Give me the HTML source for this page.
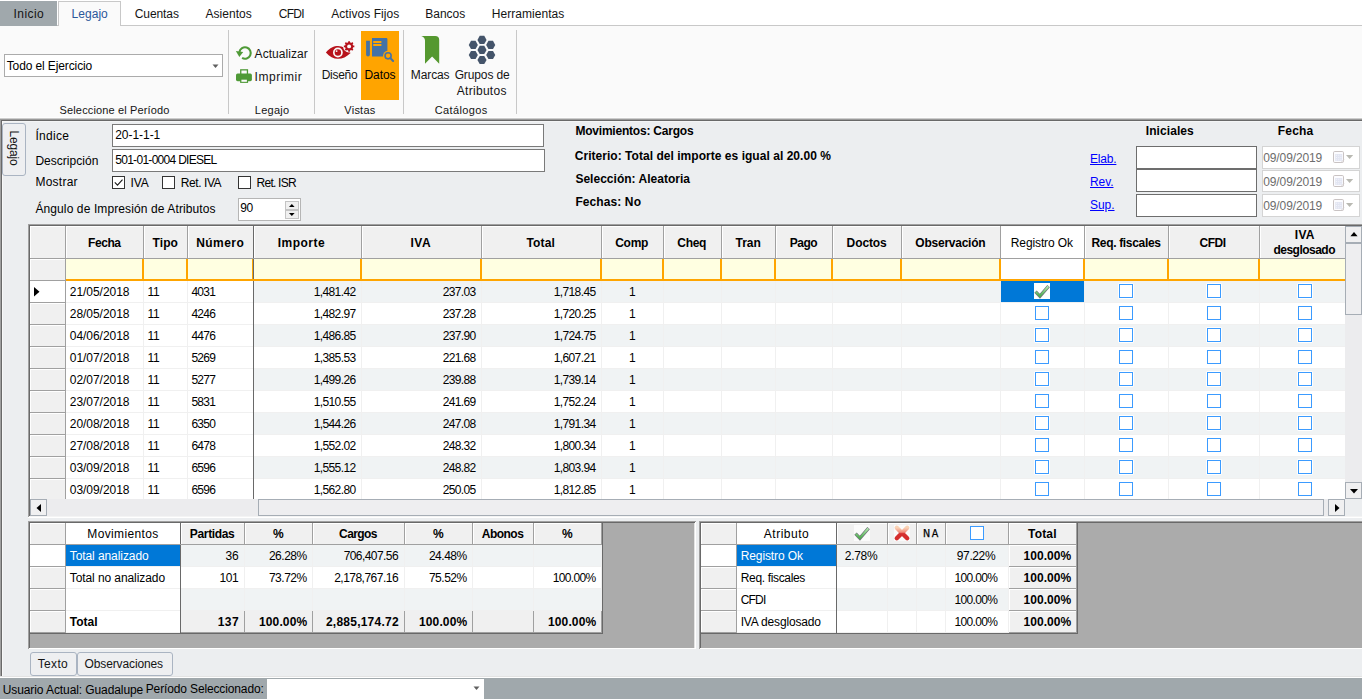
<!DOCTYPE html>
<html lang="es"><head><meta charset="utf-8"><title>Legajo</title>
<style>
html,body{margin:0;padding:0}
body{width:1362px;height:699px;position:relative;overflow:hidden;background:#eceef0;font:12px/16px "Liberation Sans", sans-serif;}
body div,body span.t,body svg{position:absolute}
.t{white-space:pre;color:#141414}
.b{border:1px solid;box-sizing:border-box}
.clip{overflow:hidden}
svg{overflow:visible}
</style></head>
<body>
<svg width="0" height="0" style="left:0;top:0"><defs>
<linearGradient id="gg" x1="0" y1="0" x2="0" y2="1"><stop offset="0" stop-color="#b4ecb0"/><stop offset="1" stop-color="#4cae4c"/></linearGradient>
<linearGradient id="gx" x1="0" y1="0" x2="0" y2="1"><stop offset="0" stop-color="#f9d2b4"/><stop offset="0.420" stop-color="#f28c7c"/><stop offset="0.560" stop-color="#d63030"/><stop offset="1" stop-color="#d42c2c"/></linearGradient>
<g id="chk"><path d="M1.500 8.700l4.400 4.500 8.700-10.100" fill="none" stroke="#70787a" stroke-width="3.300"/><path d="M1.800 8.900l4.100 4.100 8.400-9.700" fill="none" stroke="url(#gg)" stroke-width="1.900"/></g>
<g id="xx"><path d="M2.800 2.800l10.400 10.400M13.200 2.800l-10.400 10.400" stroke="url(#gx)" stroke-width="4.400" stroke-linecap="round" fill="none"/></g>
</defs></svg>
<div style="left:0px;top:0px;width:1362px;height:26px;background:#fff;"></div>
<div style="left:0px;top:25px;width:1362px;height:1px;background:#c8c8c8;"></div>
<div style="left:0px;top:1px;width:57px;height:25px;background:#a0a8ac;"></div>
<div class="b" style="left:58px;top:1px;width:63px;height:25px;background:#fafafa;border-color:#c8c8c8;border-bottom:none;"></div>
<span id="t0" class="t" style="top:5.84px;letter-spacing:0.409px;left:13.62px;">Inicio</span>
<span id="t1" class="t" style="top:5.84px;color:#2b579a;letter-spacing:0.023px;left:71.62px;">Legajo</span>
<span id="t2" class="t" style="top:5.84px;letter-spacing:-0.074px;left:134.72px;">Cuentas</span>
<span id="t3" class="t" style="top:5.84px;letter-spacing:0.047px;left:205.42px;">Asientos</span>
<span id="t4" class="t" style="top:5.84px;letter-spacing:-0.747px;left:278.82px;">CFDI</span>
<span id="t5" class="t" style="top:5.84px;letter-spacing:0.058px;left:331.22px;">Activos Fijos</span>
<span id="t6" class="t" style="top:5.84px;letter-spacing:0.006px;left:425.22px;">Bancos</span>
<span id="t7" class="t" style="top:5.84px;letter-spacing:0.048px;left:491.72px;">Herramientas</span>
<div style="left:0px;top:26px;width:1362px;height:92px;background:#fafafa;"></div>
<div style="left:228px;top:30px;width:1px;height:84px;background:#c8c8c8;"></div>
<div style="left:314px;top:30px;width:1px;height:84px;background:#c8c8c8;"></div>
<div style="left:403px;top:30px;width:1px;height:84px;background:#c8c8c8;"></div>
<div style="left:516px;top:30px;width:1px;height:84px;background:#c8c8c8;"></div>
<div class="b" style="left:4px;top:54px;width:219px;height:23px;background:#fff;border-color:#ababab;"></div>
<span id="t8" class="t" style="top:57.84px;color:#000;letter-spacing:-0.113px;left:6.72px;">Todo el Ejercicio</span>
<svg style="left:212px;top:64px" width="8" height="5"><path d="M0.500 0.500h6l-3 3.500z" fill="#606060"/></svg>
<span id="t9" class="t" style="top:102.19px;font-size:11px;letter-spacing:0.146px;left:-85.43px;width:400px;text-align:center;">Seleccione el Período</span>
<span id="t10" class="t" style="top:102.19px;font-size:11px;letter-spacing:0.277px;left:72.14px;width:400px;text-align:center;">Legajo</span>
<span id="t11" class="t" style="top:102.19px;font-size:11px;letter-spacing:0.233px;left:159.92px;width:400px;text-align:center;">Vistas</span>
<span id="t12" class="t" style="top:102.19px;font-size:11px;letter-spacing:0.360px;left:261.18px;width:400px;text-align:center;">Catálogos</span>
<div style="left:361px;top:31px;width:38px;height:69px;background:#ffa400;"></div>
<svg style="left:0;top:0" width="600" height="118" viewBox="0 0 600 118"><path d="M239.4 52A5.700 5.700 0 1 1 242.100 57.900" fill="none" stroke="#4f9a37" stroke-width="2.100"/><path d="M235.900 51.100l7.300.800-3.900 5.200z" fill="#4f9a37"/><rect x="240.750" y="69.850" width="6.700" height="5" fill="#fafafa" stroke="#4f9a37" stroke-width="1.300"/><rect x="236" y="73.600" width="15.900" height="7.600" rx="1.600" fill="#4f9a37"/><rect x="240.100" y="78.400" width="8" height="4.500" fill="#4f9a37"/><rect x="241.400" y="79.700" width="5.500" height="2.100" fill="#fafafa"/><path d="M325.900 52.400C330 47.700 334 46 338 46c4.500 0 9 2.300 12.600 6.900C346.500 56.800 342.500 58.800 338 58.800c-4.500 0-8.500-2-12.100-6.400z" fill="#b7121b"/><circle cx="337.900" cy="52.500" r="4.900" fill="#fafafa"/><circle cx="337.900" cy="52.500" r="3.200" fill="#b7121b"/><circle cx="336.600" cy="51.100" r="0.950" fill="#fafafa"/><circle cx="349.100" cy="46.400" r="6" fill="#fafafa"/><path d="M354.33 45.57L354.33 47.23L353.14 47.34L352.62 48.60L353.39 49.52L352.22 50.69L351.30 49.92L350.04 50.44L349.93 51.63L348.27 51.63L348.16 50.44L346.90 49.92L345.98 50.69L344.81 49.52L345.58 48.60L345.06 47.34L343.87 47.23L343.87 45.57L345.06 45.46L345.58 44.20L344.81 43.28L345.98 42.11L346.90 42.88L348.16 42.36L348.27 41.17L349.93 41.17L350.04 42.36L351.30 42.88L352.22 42.11L353.39 43.28L352.62 44.20L353.14 45.46z" fill="#b7121b"/><circle cx="349.100" cy="46.400" r="1.950" fill="#fafafa"/><path d="M372 37.900h14.400a1 1 0 0 1 1 1v17.600H372z" fill="#4472a6"/><path d="M366.100 40.800h3.800v13.700a1.900 1.900 0 0 1-3.800 0z" fill="#4472a6"/><path d="M373.200 42h8.200M373.200 45h8.200" stroke="#ffa400" stroke-width="1.800"/><circle cx="388.100" cy="55.800" r="5.100" fill="#ffa400"/><circle cx="388.100" cy="55.800" r="3.050" fill="#ffa400" stroke="#4472a6" stroke-width="1.600"/><path d="M390.400 58.100l2.700 2.900" stroke="#4472a6" stroke-width="2.100" stroke-linecap="round"/><path d="M421.300 36h13.900a4 4 0 0 1 4 4v23.700l-7.100-7.300-7.100 7.300V40.500c0-2.300-1.500-3.700-3.700-4.500z" fill="#55982f"/><polygon points="477.45,49.90 479.73,45.85 484.27,45.85 486.55,49.90 484.27,53.95 479.73,53.95" fill="#44546a"/><polygon points="477.45,39.90 479.73,35.85 484.27,35.85 486.55,39.90 484.27,43.95 479.73,43.95" fill="#44546a"/><polygon points="477.45,60.00 479.73,55.95 484.27,55.95 486.55,60.00 484.27,64.05 479.73,64.05" fill="#44546a"/><polygon points="468.75,44.90 471.03,40.85 475.57,40.85 477.85,44.90 475.57,48.95 471.03,48.95" fill="#44546a"/><polygon points="486.15,44.90 488.43,40.85 492.97,40.85 495.25,44.90 492.97,48.95 488.43,48.95" fill="#44546a"/><polygon points="468.75,55.00 471.03,50.95 475.57,50.95 477.85,55.00 475.57,59.05 471.03,59.05" fill="#44546a"/><polygon points="486.15,55.00 488.43,50.95 492.97,50.95 495.25,55.00 492.97,59.05 488.43,59.05" fill="#44546a"/></svg>
<span id="t13" class="t" style="top:45.84px;letter-spacing:0.053px;left:254.62px;">Actualizar</span>
<span id="t14" class="t" style="top:68.84px;letter-spacing:0.547px;left:254.62px;">Imprimir</span>
<span id="t15" class="t" style="top:66.84px;letter-spacing:-0.260px;left:139.57px;width:400px;text-align:center;">Diseño</span>
<span id="t16" class="t" style="top:66.84px;color:#000;letter-spacing:-0.075px;left:179.96px;width:400px;text-align:center;">Datos</span>
<span id="t17" class="t" style="top:66.84px;letter-spacing:-0.097px;left:230.15px;width:400px;text-align:center;">Marcas</span>
<span id="t18" class="t" style="top:66.84px;letter-spacing:-0.123px;left:282.14px;width:400px;text-align:center;">Grupos de</span>
<span id="t19" class="t" style="top:82.84px;letter-spacing:0.300px;left:281.75px;width:400px;text-align:center;">Atributos</span>
<div style="left:0px;top:119px;width:1362px;height:559px;background:#eceef0;"></div>
<div style="left:0px;top:117px;width:1362px;height:1px;background:#fdfdfd;"></div>
<div style="left:0px;top:118px;width:1362px;height:1px;background:#cdcdcd;"></div>
<div style="left:0px;top:119px;width:1362px;height:1px;background:#999999;"></div>
<div style="left:0px;top:120px;width:1362px;height:1px;background:#696969;"></div>
<div style="left:2px;top:121px;width:1360px;height:1px;background:#f4f5f6;"></div>
<div style="left:0px;top:120px;width:1px;height:556px;background:#a0a0a0;"></div>
<div style="left:1px;top:120px;width:1px;height:556px;background:#696969;"></div>
<div style="left:2px;top:121px;width:1px;height:555px;background:#f8f8f8;"></div>
<div style="left:0px;top:676px;width:1362px;height:1px;background:#e3e3e3;"></div>
<div style="left:0px;top:677px;width:1362px;height:1px;background:#fff;"></div>
<div class="b" style="left:2px;top:123px;width:24px;height:53px;background:#eeeff1;border-color:#aab4c2;border-radius:3px;"></div>
<span class="t" style="left:-6px;top:140px;width:40px;text-align:center;transform:rotate(90deg);letter-spacing:-0.200px">Legajo</span>
<span id="t20" class="t" style="top:127.84px;color:#000;letter-spacing:0.306px;left:35.42px;">Índice</span>
<span id="t21" class="t" style="top:152.84px;color:#000;letter-spacing:0.026px;left:35.42px;">Descripción</span>
<span id="t22" class="t" style="top:173.84px;color:#000;letter-spacing:0.248px;left:35.42px;">Mostrar</span>
<span id="t23" class="t" style="top:200.84px;color:#000;letter-spacing:0.109px;left:35.42px;">Ángulo de Impresión de Atributos</span>
<div class="b" style="left:112px;top:124px;width:432px;height:23px;background:#fff;border-color:#7a7a7a;"></div>
<div class="b" style="left:112px;top:149px;width:433px;height:23px;background:#fff;border-color:#7a7a7a;"></div>
<span id="t24" class="t" style="top:126.84px;color:#000;letter-spacing:-0.043px;left:115.22px;">20-1-1-1</span>
<span id="t25" class="t" style="top:151.84px;color:#000;letter-spacing:-0.707px;left:115.22px;">501-01-0004 DIESEL</span>
<div class="b" style="left:112px;top:176px;width:13px;height:13px;background:#fff;border-color:#333;"></div>
<span id="t26" class="t" style="top:174.84px;color:#000;letter-spacing:-0.147px;left:130.62px;">IVA</span>
<div class="b" style="left:162px;top:176px;width:13px;height:13px;background:#fff;border-color:#333;"></div>
<span id="t27" class="t" style="top:174.84px;color:#000;letter-spacing:-0.434px;left:180.82px;">Ret. IVA</span>
<div class="b" style="left:238px;top:176px;width:13px;height:13px;background:#fff;border-color:#333;"></div>
<span id="t28" class="t" style="top:174.84px;color:#000;letter-spacing:-0.771px;left:256.62px;">Ret. ISR</span>
<svg style="left:112px;top:176px" width="13" height="13"><path d="M2.800 6.400l2.700 2.800 5-5.600" fill="none" stroke="#1a1a1a" stroke-width="1.100"/></svg>
<div class="b" style="left:238px;top:198px;width:63px;height:23px;background:#fff;border-color:#b5b5b5;"></div>
<span id="t29" class="t" style="top:199.84px;color:#000;letter-spacing:-0.299px;left:240.22px;">90</span>
<div class="b" style="left:285px;top:201px;width:14px;height:9px;background:#f0f0f0;border-color:#c4c4c4;"></div>
<div class="b" style="left:285px;top:210px;width:14px;height:9px;background:#f0f0f0;border-color:#c4c4c4;"></div>
<svg style="left:288px;top:203px" width="8" height="5"><path d="M1 4h5.600l-2.800-3z" fill="#000"/></svg>
<svg style="left:288px;top:212px" width="8" height="5"><path d="M1 1h5.600l-2.800 3z" fill="#000"/></svg>
<span id="t30" class="t" style="top:122.84px;font-weight:700;color:#000;letter-spacing:-0.214px;left:575.42px;">Movimientos: Cargos</span>
<span id="t31" class="t" style="top:147.84px;font-weight:700;color:#000;letter-spacing:0.036px;left:574.72px;">Criterio: Total del importe es igual al 20.00 %</span>
<span id="t32" class="t" style="top:170.84px;font-weight:700;color:#000;letter-spacing:0.015px;left:575.42px;">Selección: Aleatoria</span>
<span id="t33" class="t" style="top:193.84px;font-weight:700;color:#000;letter-spacing:0.097px;left:575.42px;">Fechas: No</span>
<span id="t34" class="t" style="top:122.84px;font-weight:700;color:#000;letter-spacing:0.086px;left:1145.72px;">Iniciales</span>
<span id="t35" class="t" style="top:122.84px;font-weight:700;color:#000;letter-spacing:0.218px;left:1277.72px;">Fecha</span>
<span id="t36" class="t" style="top:150.84px;color:#0000ff;letter-spacing:-0.200px;left:1090.02px;text-decoration:underline;">Elab.</span>
<div class="b" style="left:1136px;top:146px;width:121px;height:23px;background:#fff;border-color:#6d6d6d;"></div>
<span id="t37" class="t" style="top:173.84px;color:#0000ff;letter-spacing:-0.079px;left:1090.02px;text-decoration:underline;">Rev.</span>
<div class="b" style="left:1136px;top:169px;width:121px;height:23px;background:#fff;border-color:#6d6d6d;"></div>
<span id="t38" class="t" style="top:196.84px;color:#0000ff;letter-spacing:-0.043px;left:1090.02px;text-decoration:underline;">Sup.</span>
<div class="b" style="left:1136px;top:194px;width:121px;height:23px;background:#fff;border-color:#6d6d6d;"></div>
<div class="b" style="left:1262px;top:146px;width:98px;height:23px;background:#fff;border-color:#d4d4d4;"></div>
<span id="t39" class="t" style="top:150.34px;color:#6d6d6d;letter-spacing:-0.111px;left:1263.22px;">09/09/2019</span>
<svg style="left:1333px;top:151px" width="24" height="13"><rect x="0.500" y="0.500" width="10" height="11" rx="1.200" fill="#fcfcff" stroke="#c9c3c3"/><rect x="2.200" y="3" width="7" height="7" fill="#e2e5f2"/><path d="M3.500 3v7M5.700 3v7M7.900 3v7" stroke="#f4f5fb" stroke-width="0.900" stroke-dasharray="1.100 1.200" stroke-dashoffset="-0.700"/><path d="M8 11.500l3-3" stroke="#d8d4d4"/><path d="M13 4h7.200l-3.600 4z" fill="#b9b9b2"/></svg>
<div class="b" style="left:1262px;top:170px;width:98px;height:22px;background:#fff;border-color:#d4d4d4;"></div>
<span id="t40" class="t" style="top:174.34px;color:#6d6d6d;letter-spacing:-0.111px;left:1263.22px;">09/09/2019</span>
<svg style="left:1333px;top:175px" width="24" height="13"><rect x="0.500" y="0.500" width="10" height="11" rx="1.200" fill="#fcfcff" stroke="#c9c3c3"/><rect x="2.200" y="3" width="7" height="7" fill="#e2e5f2"/><path d="M3.500 3v7M5.700 3v7M7.900 3v7" stroke="#f4f5fb" stroke-width="0.900" stroke-dasharray="1.100 1.200" stroke-dashoffset="-0.700"/><path d="M8 11.500l3-3" stroke="#d8d4d4"/><path d="M13 4h7.200l-3.600 4z" fill="#b9b9b2"/></svg>
<div class="b" style="left:1262px;top:194px;width:98px;height:23px;background:#fff;border-color:#d4d4d4;"></div>
<span id="t41" class="t" style="top:198.34px;color:#6d6d6d;letter-spacing:-0.111px;left:1263.22px;">09/09/2019</span>
<svg style="left:1333px;top:199px" width="24" height="13"><rect x="0.500" y="0.500" width="10" height="11" rx="1.200" fill="#fcfcff" stroke="#c9c3c3"/><rect x="2.200" y="3" width="7" height="7" fill="#e2e5f2"/><path d="M3.500 3v7M5.700 3v7M7.900 3v7" stroke="#f4f5fb" stroke-width="0.900" stroke-dasharray="1.100 1.200" stroke-dashoffset="-0.700"/><path d="M8 11.500l3-3" stroke="#d8d4d4"/><path d="M13 4h7.200l-3.600 4z" fill="#b9b9b2"/></svg>
<div style="left:28px;top:224px;width:1334px;height:1px;background:#a0a0a0;"></div>
<div style="left:29px;top:225px;width:1333px;height:1px;background:#696969;"></div>
<div style="left:28px;top:224px;width:1px;height:294px;background:#a0a0a0;"></div>
<div style="left:29px;top:225px;width:1px;height:292px;background:#696969;"></div>
<div style="left:29px;top:516px;width:1333px;height:1px;background:#f4f4f4;"></div>
<div style="left:28px;top:517px;width:1334px;height:1px;background:#fff;"></div>
<div style="left:30px;top:226px;width:1332px;height:290px;background:#fff;"></div>
<div class="clip" style="left:0;top:226px;width:1362px;height:273px"><div style="left:0;top:-226px;width:1362px;height:699px">
<div style="left:254px;top:281px;width:1091px;height:21px;background:#f0f3f4;"></div>
<div style="left:66px;top:302px;width:1279px;height:1px;background:#f0f0f0;"></div>
<div style="left:30px;top:281px;width:36px;height:22px;background:#fff;"></div>
<div style="left:65px;top:281px;width:1px;height:22px;background:#a0a0a0;"></div>
<div style="left:30px;top:302px;width:36px;height:1px;background:#a0a0a0;"></div>
<span id="t42" class="t" style="top:283.84px;color:#000;letter-spacing:-0.045px;left:69.82px;">21/05/2018</span>
<span id="t43" class="t" style="top:283.84px;color:#000;letter-spacing:-0.309px;left:147.62px;">11</span>
<span id="t44" class="t" style="top:283.84px;color:#000;letter-spacing:-0.714px;left:191.42px;">4031</span>
<span id="t45" class="t" style="top:283.84px;color:#000;letter-spacing:-0.594px;right:1006.41px;">1,481.42</span>
<span id="t46" class="t" style="top:283.84px;color:#000;letter-spacing:-0.649px;right:886.47px;">237.03</span>
<span id="t47" class="t" style="top:283.84px;color:#000;letter-spacing:-0.594px;right:766.41px;">1,718.45</span>
<span id="t48" class="t" style="top:283.84px;color:#000;letter-spacing:-0.200px;left:432.20px;width:400px;text-align:center;">1</span>
<div style="left:1001px;top:281px;width:83px;height:21px;background:#0078d7;"></div>
<div style="left:1034px;top:283px;width:16px;height:16px;background:#fff;"></div>
<svg style="left:1034px;top:283px" width="16" height="16"><use href="#chk"/></svg>
<div style="left:1118px;top:283px;width:16px;height:16px;background:#fff;border-radius:2px;"></div>
<div class="b" style="left:1119px;top:284px;width:14px;height:14px;background:#fff;border-color:#3b9bff;border-width:1.400px;"></div>
<div style="left:1206px;top:283px;width:16px;height:16px;background:#fff;border-radius:2px;"></div>
<div class="b" style="left:1207px;top:284px;width:14px;height:14px;background:#fff;border-color:#3b9bff;border-width:1.400px;"></div>
<div style="left:1297px;top:283px;width:16px;height:16px;background:#fff;border-radius:2px;"></div>
<div class="b" style="left:1298px;top:284px;width:14px;height:14px;background:#fff;border-color:#3b9bff;border-width:1.400px;"></div>
<div style="left:66px;top:324px;width:1279px;height:1px;background:#f0f0f0;"></div>
<div style="left:30px;top:303px;width:36px;height:22px;background:#f0f0f0;"></div>
<div style="left:30px;top:303px;width:35px;height:1px;background:#fff;"></div>
<div style="left:30px;top:303px;width:1px;height:21px;background:#fff;"></div>
<div style="left:65px;top:303px;width:1px;height:22px;background:#a0a0a0;"></div>
<div style="left:30px;top:324px;width:36px;height:1px;background:#a0a0a0;"></div>
<span id="t49" class="t" style="top:305.84px;color:#000;letter-spacing:-0.045px;left:69.82px;">28/05/2018</span>
<span id="t50" class="t" style="top:305.84px;color:#000;letter-spacing:-0.309px;left:147.62px;">11</span>
<span id="t51" class="t" style="top:305.84px;color:#000;letter-spacing:-0.714px;left:191.42px;">4246</span>
<span id="t52" class="t" style="top:305.84px;color:#000;letter-spacing:-0.594px;right:1006.41px;">1,482.97</span>
<span id="t53" class="t" style="top:305.84px;color:#000;letter-spacing:-0.649px;right:886.47px;">237.28</span>
<span id="t54" class="t" style="top:305.84px;color:#000;letter-spacing:-0.594px;right:766.41px;">1,720.25</span>
<span id="t55" class="t" style="top:305.84px;color:#000;letter-spacing:-0.200px;left:432.20px;width:400px;text-align:center;">1</span>
<div style="left:1034px;top:305px;width:16px;height:16px;background:#fff;border-radius:2px;"></div>
<div class="b" style="left:1035px;top:306px;width:14px;height:14px;background:#fff;border-color:#3b9bff;border-width:1.400px;"></div>
<div style="left:1118px;top:305px;width:16px;height:16px;background:#fff;border-radius:2px;"></div>
<div class="b" style="left:1119px;top:306px;width:14px;height:14px;background:#fff;border-color:#3b9bff;border-width:1.400px;"></div>
<div style="left:1206px;top:305px;width:16px;height:16px;background:#fff;border-radius:2px;"></div>
<div class="b" style="left:1207px;top:306px;width:14px;height:14px;background:#fff;border-color:#3b9bff;border-width:1.400px;"></div>
<div style="left:1297px;top:305px;width:16px;height:16px;background:#fff;border-radius:2px;"></div>
<div class="b" style="left:1298px;top:306px;width:14px;height:14px;background:#fff;border-color:#3b9bff;border-width:1.400px;"></div>
<div style="left:254px;top:325px;width:1091px;height:21px;background:#f0f3f4;"></div>
<div style="left:66px;top:346px;width:1279px;height:1px;background:#f0f0f0;"></div>
<div style="left:30px;top:325px;width:36px;height:22px;background:#f0f0f0;"></div>
<div style="left:30px;top:325px;width:35px;height:1px;background:#fff;"></div>
<div style="left:30px;top:325px;width:1px;height:21px;background:#fff;"></div>
<div style="left:65px;top:325px;width:1px;height:22px;background:#a0a0a0;"></div>
<div style="left:30px;top:346px;width:36px;height:1px;background:#a0a0a0;"></div>
<span id="t56" class="t" style="top:327.84px;color:#000;letter-spacing:-0.045px;left:69.82px;">04/06/2018</span>
<span id="t57" class="t" style="top:327.84px;color:#000;letter-spacing:-0.309px;left:147.62px;">11</span>
<span id="t58" class="t" style="top:327.84px;color:#000;letter-spacing:-0.714px;left:191.42px;">4476</span>
<span id="t59" class="t" style="top:327.84px;color:#000;letter-spacing:-0.594px;right:1006.41px;">1,486.85</span>
<span id="t60" class="t" style="top:327.84px;color:#000;letter-spacing:-0.649px;right:886.47px;">237.90</span>
<span id="t61" class="t" style="top:327.84px;color:#000;letter-spacing:-0.594px;right:766.41px;">1,724.75</span>
<span id="t62" class="t" style="top:327.84px;color:#000;letter-spacing:-0.200px;left:432.20px;width:400px;text-align:center;">1</span>
<div style="left:1034px;top:327px;width:16px;height:16px;background:#fff;border-radius:2px;"></div>
<div class="b" style="left:1035px;top:328px;width:14px;height:14px;background:#fff;border-color:#3b9bff;border-width:1.400px;"></div>
<div style="left:1118px;top:327px;width:16px;height:16px;background:#fff;border-radius:2px;"></div>
<div class="b" style="left:1119px;top:328px;width:14px;height:14px;background:#fff;border-color:#3b9bff;border-width:1.400px;"></div>
<div style="left:1206px;top:327px;width:16px;height:16px;background:#fff;border-radius:2px;"></div>
<div class="b" style="left:1207px;top:328px;width:14px;height:14px;background:#fff;border-color:#3b9bff;border-width:1.400px;"></div>
<div style="left:1297px;top:327px;width:16px;height:16px;background:#fff;border-radius:2px;"></div>
<div class="b" style="left:1298px;top:328px;width:14px;height:14px;background:#fff;border-color:#3b9bff;border-width:1.400px;"></div>
<div style="left:66px;top:368px;width:1279px;height:1px;background:#f0f0f0;"></div>
<div style="left:30px;top:347px;width:36px;height:22px;background:#f0f0f0;"></div>
<div style="left:30px;top:347px;width:35px;height:1px;background:#fff;"></div>
<div style="left:30px;top:347px;width:1px;height:21px;background:#fff;"></div>
<div style="left:65px;top:347px;width:1px;height:22px;background:#a0a0a0;"></div>
<div style="left:30px;top:368px;width:36px;height:1px;background:#a0a0a0;"></div>
<span id="t63" class="t" style="top:349.84px;color:#000;letter-spacing:-0.045px;left:69.82px;">01/07/2018</span>
<span id="t64" class="t" style="top:349.84px;color:#000;letter-spacing:-0.309px;left:147.62px;">11</span>
<span id="t65" class="t" style="top:349.84px;color:#000;letter-spacing:-0.714px;left:191.42px;">5269</span>
<span id="t66" class="t" style="top:349.84px;color:#000;letter-spacing:-0.594px;right:1006.41px;">1,385.53</span>
<span id="t67" class="t" style="top:349.84px;color:#000;letter-spacing:-0.649px;right:886.47px;">221.68</span>
<span id="t68" class="t" style="top:349.84px;color:#000;letter-spacing:-0.594px;right:766.41px;">1,607.21</span>
<span id="t69" class="t" style="top:349.84px;color:#000;letter-spacing:-0.200px;left:432.20px;width:400px;text-align:center;">1</span>
<div style="left:1034px;top:349px;width:16px;height:16px;background:#fff;border-radius:2px;"></div>
<div class="b" style="left:1035px;top:350px;width:14px;height:14px;background:#fff;border-color:#3b9bff;border-width:1.400px;"></div>
<div style="left:1118px;top:349px;width:16px;height:16px;background:#fff;border-radius:2px;"></div>
<div class="b" style="left:1119px;top:350px;width:14px;height:14px;background:#fff;border-color:#3b9bff;border-width:1.400px;"></div>
<div style="left:1206px;top:349px;width:16px;height:16px;background:#fff;border-radius:2px;"></div>
<div class="b" style="left:1207px;top:350px;width:14px;height:14px;background:#fff;border-color:#3b9bff;border-width:1.400px;"></div>
<div style="left:1297px;top:349px;width:16px;height:16px;background:#fff;border-radius:2px;"></div>
<div class="b" style="left:1298px;top:350px;width:14px;height:14px;background:#fff;border-color:#3b9bff;border-width:1.400px;"></div>
<div style="left:254px;top:369px;width:1091px;height:21px;background:#f0f3f4;"></div>
<div style="left:66px;top:390px;width:1279px;height:1px;background:#f0f0f0;"></div>
<div style="left:30px;top:369px;width:36px;height:22px;background:#f0f0f0;"></div>
<div style="left:30px;top:369px;width:35px;height:1px;background:#fff;"></div>
<div style="left:30px;top:369px;width:1px;height:21px;background:#fff;"></div>
<div style="left:65px;top:369px;width:1px;height:22px;background:#a0a0a0;"></div>
<div style="left:30px;top:390px;width:36px;height:1px;background:#a0a0a0;"></div>
<span id="t70" class="t" style="top:371.84px;color:#000;letter-spacing:-0.045px;left:69.82px;">02/07/2018</span>
<span id="t71" class="t" style="top:371.84px;color:#000;letter-spacing:-0.309px;left:147.62px;">11</span>
<span id="t72" class="t" style="top:371.84px;color:#000;letter-spacing:-0.714px;left:191.42px;">5277</span>
<span id="t73" class="t" style="top:371.84px;color:#000;letter-spacing:-0.594px;right:1006.41px;">1,499.26</span>
<span id="t74" class="t" style="top:371.84px;color:#000;letter-spacing:-0.649px;right:886.47px;">239.88</span>
<span id="t75" class="t" style="top:371.84px;color:#000;letter-spacing:-0.594px;right:766.41px;">1,739.14</span>
<span id="t76" class="t" style="top:371.84px;color:#000;letter-spacing:-0.200px;left:432.20px;width:400px;text-align:center;">1</span>
<div style="left:1034px;top:371px;width:16px;height:16px;background:#fff;border-radius:2px;"></div>
<div class="b" style="left:1035px;top:372px;width:14px;height:14px;background:#fff;border-color:#3b9bff;border-width:1.400px;"></div>
<div style="left:1118px;top:371px;width:16px;height:16px;background:#fff;border-radius:2px;"></div>
<div class="b" style="left:1119px;top:372px;width:14px;height:14px;background:#fff;border-color:#3b9bff;border-width:1.400px;"></div>
<div style="left:1206px;top:371px;width:16px;height:16px;background:#fff;border-radius:2px;"></div>
<div class="b" style="left:1207px;top:372px;width:14px;height:14px;background:#fff;border-color:#3b9bff;border-width:1.400px;"></div>
<div style="left:1297px;top:371px;width:16px;height:16px;background:#fff;border-radius:2px;"></div>
<div class="b" style="left:1298px;top:372px;width:14px;height:14px;background:#fff;border-color:#3b9bff;border-width:1.400px;"></div>
<div style="left:66px;top:412px;width:1279px;height:1px;background:#f0f0f0;"></div>
<div style="left:30px;top:391px;width:36px;height:22px;background:#f0f0f0;"></div>
<div style="left:30px;top:391px;width:35px;height:1px;background:#fff;"></div>
<div style="left:30px;top:391px;width:1px;height:21px;background:#fff;"></div>
<div style="left:65px;top:391px;width:1px;height:22px;background:#a0a0a0;"></div>
<div style="left:30px;top:412px;width:36px;height:1px;background:#a0a0a0;"></div>
<span id="t77" class="t" style="top:393.84px;color:#000;letter-spacing:-0.045px;left:69.82px;">23/07/2018</span>
<span id="t78" class="t" style="top:393.84px;color:#000;letter-spacing:-0.309px;left:147.62px;">11</span>
<span id="t79" class="t" style="top:393.84px;color:#000;letter-spacing:-0.714px;left:191.42px;">5831</span>
<span id="t80" class="t" style="top:393.84px;color:#000;letter-spacing:-0.594px;right:1006.41px;">1,510.55</span>
<span id="t81" class="t" style="top:393.84px;color:#000;letter-spacing:-0.649px;right:886.47px;">241.69</span>
<span id="t82" class="t" style="top:393.84px;color:#000;letter-spacing:-0.594px;right:766.41px;">1,752.24</span>
<span id="t83" class="t" style="top:393.84px;color:#000;letter-spacing:-0.200px;left:432.20px;width:400px;text-align:center;">1</span>
<div style="left:1034px;top:393px;width:16px;height:16px;background:#fff;border-radius:2px;"></div>
<div class="b" style="left:1035px;top:394px;width:14px;height:14px;background:#fff;border-color:#3b9bff;border-width:1.400px;"></div>
<div style="left:1118px;top:393px;width:16px;height:16px;background:#fff;border-radius:2px;"></div>
<div class="b" style="left:1119px;top:394px;width:14px;height:14px;background:#fff;border-color:#3b9bff;border-width:1.400px;"></div>
<div style="left:1206px;top:393px;width:16px;height:16px;background:#fff;border-radius:2px;"></div>
<div class="b" style="left:1207px;top:394px;width:14px;height:14px;background:#fff;border-color:#3b9bff;border-width:1.400px;"></div>
<div style="left:1297px;top:393px;width:16px;height:16px;background:#fff;border-radius:2px;"></div>
<div class="b" style="left:1298px;top:394px;width:14px;height:14px;background:#fff;border-color:#3b9bff;border-width:1.400px;"></div>
<div style="left:254px;top:413px;width:1091px;height:21px;background:#f0f3f4;"></div>
<div style="left:66px;top:434px;width:1279px;height:1px;background:#f0f0f0;"></div>
<div style="left:30px;top:413px;width:36px;height:22px;background:#f0f0f0;"></div>
<div style="left:30px;top:413px;width:35px;height:1px;background:#fff;"></div>
<div style="left:30px;top:413px;width:1px;height:21px;background:#fff;"></div>
<div style="left:65px;top:413px;width:1px;height:22px;background:#a0a0a0;"></div>
<div style="left:30px;top:434px;width:36px;height:1px;background:#a0a0a0;"></div>
<span id="t84" class="t" style="top:415.84px;color:#000;letter-spacing:-0.045px;left:69.82px;">20/08/2018</span>
<span id="t85" class="t" style="top:415.84px;color:#000;letter-spacing:-0.309px;left:147.62px;">11</span>
<span id="t86" class="t" style="top:415.84px;color:#000;letter-spacing:-0.714px;left:191.42px;">6350</span>
<span id="t87" class="t" style="top:415.84px;color:#000;letter-spacing:-0.594px;right:1006.41px;">1,544.26</span>
<span id="t88" class="t" style="top:415.84px;color:#000;letter-spacing:-0.649px;right:886.47px;">247.08</span>
<span id="t89" class="t" style="top:415.84px;color:#000;letter-spacing:-0.594px;right:766.41px;">1,791.34</span>
<span id="t90" class="t" style="top:415.84px;color:#000;letter-spacing:-0.200px;left:432.20px;width:400px;text-align:center;">1</span>
<div style="left:1034px;top:415px;width:16px;height:16px;background:#fff;border-radius:2px;"></div>
<div class="b" style="left:1035px;top:416px;width:14px;height:14px;background:#fff;border-color:#3b9bff;border-width:1.400px;"></div>
<div style="left:1118px;top:415px;width:16px;height:16px;background:#fff;border-radius:2px;"></div>
<div class="b" style="left:1119px;top:416px;width:14px;height:14px;background:#fff;border-color:#3b9bff;border-width:1.400px;"></div>
<div style="left:1206px;top:415px;width:16px;height:16px;background:#fff;border-radius:2px;"></div>
<div class="b" style="left:1207px;top:416px;width:14px;height:14px;background:#fff;border-color:#3b9bff;border-width:1.400px;"></div>
<div style="left:1297px;top:415px;width:16px;height:16px;background:#fff;border-radius:2px;"></div>
<div class="b" style="left:1298px;top:416px;width:14px;height:14px;background:#fff;border-color:#3b9bff;border-width:1.400px;"></div>
<div style="left:66px;top:456px;width:1279px;height:1px;background:#f0f0f0;"></div>
<div style="left:30px;top:435px;width:36px;height:22px;background:#f0f0f0;"></div>
<div style="left:30px;top:435px;width:35px;height:1px;background:#fff;"></div>
<div style="left:30px;top:435px;width:1px;height:21px;background:#fff;"></div>
<div style="left:65px;top:435px;width:1px;height:22px;background:#a0a0a0;"></div>
<div style="left:30px;top:456px;width:36px;height:1px;background:#a0a0a0;"></div>
<span id="t91" class="t" style="top:437.84px;color:#000;letter-spacing:-0.045px;left:69.82px;">27/08/2018</span>
<span id="t92" class="t" style="top:437.84px;color:#000;letter-spacing:-0.309px;left:147.62px;">11</span>
<span id="t93" class="t" style="top:437.84px;color:#000;letter-spacing:-0.714px;left:191.42px;">6478</span>
<span id="t94" class="t" style="top:437.84px;color:#000;letter-spacing:-0.594px;right:1006.41px;">1,552.02</span>
<span id="t95" class="t" style="top:437.84px;color:#000;letter-spacing:-0.649px;right:886.47px;">248.32</span>
<span id="t96" class="t" style="top:437.84px;color:#000;letter-spacing:-0.594px;right:766.41px;">1,800.34</span>
<span id="t97" class="t" style="top:437.84px;color:#000;letter-spacing:-0.200px;left:432.20px;width:400px;text-align:center;">1</span>
<div style="left:1034px;top:437px;width:16px;height:16px;background:#fff;border-radius:2px;"></div>
<div class="b" style="left:1035px;top:438px;width:14px;height:14px;background:#fff;border-color:#3b9bff;border-width:1.400px;"></div>
<div style="left:1118px;top:437px;width:16px;height:16px;background:#fff;border-radius:2px;"></div>
<div class="b" style="left:1119px;top:438px;width:14px;height:14px;background:#fff;border-color:#3b9bff;border-width:1.400px;"></div>
<div style="left:1206px;top:437px;width:16px;height:16px;background:#fff;border-radius:2px;"></div>
<div class="b" style="left:1207px;top:438px;width:14px;height:14px;background:#fff;border-color:#3b9bff;border-width:1.400px;"></div>
<div style="left:1297px;top:437px;width:16px;height:16px;background:#fff;border-radius:2px;"></div>
<div class="b" style="left:1298px;top:438px;width:14px;height:14px;background:#fff;border-color:#3b9bff;border-width:1.400px;"></div>
<div style="left:254px;top:457px;width:1091px;height:21px;background:#f0f3f4;"></div>
<div style="left:66px;top:478px;width:1279px;height:1px;background:#f0f0f0;"></div>
<div style="left:30px;top:457px;width:36px;height:22px;background:#f0f0f0;"></div>
<div style="left:30px;top:457px;width:35px;height:1px;background:#fff;"></div>
<div style="left:30px;top:457px;width:1px;height:21px;background:#fff;"></div>
<div style="left:65px;top:457px;width:1px;height:22px;background:#a0a0a0;"></div>
<div style="left:30px;top:478px;width:36px;height:1px;background:#a0a0a0;"></div>
<span id="t98" class="t" style="top:459.84px;color:#000;letter-spacing:-0.045px;left:69.82px;">03/09/2018</span>
<span id="t99" class="t" style="top:459.84px;color:#000;letter-spacing:-0.309px;left:147.62px;">11</span>
<span id="t100" class="t" style="top:459.84px;color:#000;letter-spacing:-0.714px;left:191.42px;">6596</span>
<span id="t101" class="t" style="top:459.84px;color:#000;letter-spacing:-0.594px;right:1006.41px;">1,555.12</span>
<span id="t102" class="t" style="top:459.84px;color:#000;letter-spacing:-0.649px;right:886.47px;">248.82</span>
<span id="t103" class="t" style="top:459.84px;color:#000;letter-spacing:-0.594px;right:766.41px;">1,803.94</span>
<span id="t104" class="t" style="top:459.84px;color:#000;letter-spacing:-0.200px;left:432.20px;width:400px;text-align:center;">1</span>
<div style="left:1034px;top:459px;width:16px;height:16px;background:#fff;border-radius:2px;"></div>
<div class="b" style="left:1035px;top:460px;width:14px;height:14px;background:#fff;border-color:#3b9bff;border-width:1.400px;"></div>
<div style="left:1118px;top:459px;width:16px;height:16px;background:#fff;border-radius:2px;"></div>
<div class="b" style="left:1119px;top:460px;width:14px;height:14px;background:#fff;border-color:#3b9bff;border-width:1.400px;"></div>
<div style="left:1206px;top:459px;width:16px;height:16px;background:#fff;border-radius:2px;"></div>
<div class="b" style="left:1207px;top:460px;width:14px;height:14px;background:#fff;border-color:#3b9bff;border-width:1.400px;"></div>
<div style="left:1297px;top:459px;width:16px;height:16px;background:#fff;border-radius:2px;"></div>
<div class="b" style="left:1298px;top:460px;width:14px;height:14px;background:#fff;border-color:#3b9bff;border-width:1.400px;"></div>
<div style="left:66px;top:500px;width:1279px;height:1px;background:#f0f0f0;"></div>
<div style="left:30px;top:479px;width:36px;height:22px;background:#f0f0f0;"></div>
<div style="left:30px;top:479px;width:35px;height:1px;background:#fff;"></div>
<div style="left:30px;top:479px;width:1px;height:21px;background:#fff;"></div>
<div style="left:65px;top:479px;width:1px;height:22px;background:#a0a0a0;"></div>
<div style="left:30px;top:500px;width:36px;height:1px;background:#a0a0a0;"></div>
<span id="t105" class="t" style="top:481.84px;color:#000;letter-spacing:-0.045px;left:69.82px;">03/09/2018</span>
<span id="t106" class="t" style="top:481.84px;color:#000;letter-spacing:-0.309px;left:147.62px;">11</span>
<span id="t107" class="t" style="top:481.84px;color:#000;letter-spacing:-0.714px;left:191.42px;">6596</span>
<span id="t108" class="t" style="top:481.84px;color:#000;letter-spacing:-0.594px;right:1006.41px;">1,562.80</span>
<span id="t109" class="t" style="top:481.84px;color:#000;letter-spacing:-0.649px;right:886.47px;">250.05</span>
<span id="t110" class="t" style="top:481.84px;color:#000;letter-spacing:-0.594px;right:766.41px;">1,812.85</span>
<span id="t111" class="t" style="top:481.84px;color:#000;letter-spacing:-0.200px;left:432.20px;width:400px;text-align:center;">1</span>
<div style="left:1034px;top:481px;width:16px;height:16px;background:#fff;border-radius:2px;"></div>
<div class="b" style="left:1035px;top:482px;width:14px;height:14px;background:#fff;border-color:#3b9bff;border-width:1.400px;"></div>
<div style="left:1118px;top:481px;width:16px;height:16px;background:#fff;border-radius:2px;"></div>
<div class="b" style="left:1119px;top:482px;width:14px;height:14px;background:#fff;border-color:#3b9bff;border-width:1.400px;"></div>
<div style="left:1206px;top:481px;width:16px;height:16px;background:#fff;border-radius:2px;"></div>
<div class="b" style="left:1207px;top:482px;width:14px;height:14px;background:#fff;border-color:#3b9bff;border-width:1.400px;"></div>
<div style="left:1297px;top:481px;width:16px;height:16px;background:#fff;border-radius:2px;"></div>
<div class="b" style="left:1298px;top:482px;width:14px;height:14px;background:#fff;border-color:#3b9bff;border-width:1.400px;"></div>
<div style="left:143px;top:281px;width:1px;height:218px;background:#f0f0f0;"></div>
<div style="left:187px;top:281px;width:1px;height:218px;background:#f0f0f0;"></div>
<div style="left:253px;top:281px;width:1px;height:218px;background:#696969;"></div>
<div style="left:361px;top:281px;width:1px;height:218px;background:#f0f0f0;"></div>
<div style="left:481px;top:281px;width:1px;height:218px;background:#f0f0f0;"></div>
<div style="left:601px;top:281px;width:1px;height:218px;background:#f0f0f0;"></div>
<div style="left:663px;top:281px;width:1px;height:218px;background:#f0f0f0;"></div>
<div style="left:721px;top:281px;width:1px;height:218px;background:#f0f0f0;"></div>
<div style="left:775px;top:281px;width:1px;height:218px;background:#f0f0f0;"></div>
<div style="left:832px;top:281px;width:1px;height:218px;background:#f0f0f0;"></div>
<div style="left:901px;top:281px;width:1px;height:218px;background:#f0f0f0;"></div>
<div style="left:1000px;top:281px;width:1px;height:218px;background:#f0f0f0;"></div>
<div style="left:1084px;top:281px;width:1px;height:218px;background:#f0f0f0;"></div>
<div style="left:1168px;top:281px;width:1px;height:218px;background:#f0f0f0;"></div>
<div style="left:1259px;top:281px;width:1px;height:218px;background:#f0f0f0;"></div>
<div style="left:1345px;top:281px;width:1px;height:218px;background:#f0f0f0;"></div>
<svg style="left:34px;top:287px" width="6" height="10"><path d="M0 0l5.500 4.800L0 9.600z" fill="#000"/></svg>
</div></div>
<div style="left:30px;top:226px;width:36px;height:33px;background:#f0f0f0;"></div>
<div style="left:30px;top:226px;width:35px;height:1px;background:#fff;"></div>
<div style="left:30px;top:226px;width:1px;height:32px;background:#fff;"></div>
<div style="left:65px;top:226px;width:1px;height:33px;background:#a0a0a0;"></div>
<div style="left:30px;top:258px;width:36px;height:1px;background:#a0a0a0;"></div>
<div style="left:30px;top:259px;width:36px;height:22px;background:#f0f0f0;"></div>
<div style="left:30px;top:259px;width:35px;height:1px;background:#fff;"></div>
<div style="left:30px;top:259px;width:1px;height:21px;background:#fff;"></div>
<div style="left:65px;top:259px;width:1px;height:22px;background:#a0a0a0;"></div>
<div style="left:30px;top:280px;width:36px;height:1px;background:#a0a0a0;"></div>
<div style="left:66px;top:226px;width:78px;height:33px;background:#f0f0f0;"></div>
<div style="left:66px;top:226px;width:77px;height:1px;background:#fff;"></div>
<div style="left:66px;top:226px;width:1px;height:32px;background:#fff;"></div>
<div style="left:143px;top:226px;width:1px;height:33px;background:#a0a0a0;"></div>
<div style="left:66px;top:258px;width:78px;height:1px;background:#a0a0a0;"></div>
<div style="left:66px;top:259px;width:78px;height:20px;background:#ffffe1;"></div>
<div style="left:142px;top:259px;width:2px;height:22px;background:#ffa500;"></div>
<span id="t112" class="t" style="top:234.84px;font-weight:700;color:#000;letter-spacing:-0.407px;left:-95.70px;width:400px;text-align:center;">Fecha</span>
<div style="left:144px;top:226px;width:44px;height:33px;background:#f0f0f0;"></div>
<div style="left:144px;top:226px;width:43px;height:1px;background:#fff;"></div>
<div style="left:144px;top:226px;width:1px;height:32px;background:#fff;"></div>
<div style="left:187px;top:226px;width:1px;height:33px;background:#a0a0a0;"></div>
<div style="left:144px;top:258px;width:44px;height:1px;background:#a0a0a0;"></div>
<div style="left:144px;top:259px;width:44px;height:20px;background:#ffffe1;"></div>
<div style="left:186px;top:259px;width:2px;height:22px;background:#ffa500;"></div>
<span id="t113" class="t" style="top:234.84px;font-weight:700;color:#000;letter-spacing:0.050px;left:-34.78px;width:400px;text-align:center;">Tipo</span>
<div style="left:188px;top:226px;width:66px;height:33px;background:#f0f0f0;"></div>
<div style="left:188px;top:226px;width:65px;height:1px;background:#fff;"></div>
<div style="left:188px;top:226px;width:1px;height:32px;background:#fff;"></div>
<div style="left:253px;top:226px;width:1px;height:33px;background:#696969;"></div>
<div style="left:188px;top:258px;width:66px;height:1px;background:#a0a0a0;"></div>
<div style="left:188px;top:259px;width:66px;height:20px;background:#ffffe1;"></div>
<div style="left:252px;top:259px;width:2px;height:22px;background:#ffa500;"></div>
<span id="t114" class="t" style="top:234.84px;font-weight:700;color:#000;letter-spacing:0.463px;left:20.23px;width:400px;text-align:center;">Número</span>
<div style="left:254px;top:226px;width:108px;height:33px;background:#f0f0f0;"></div>
<div style="left:254px;top:226px;width:107px;height:1px;background:#fff;"></div>
<div style="left:254px;top:226px;width:1px;height:32px;background:#fff;"></div>
<div style="left:361px;top:226px;width:1px;height:33px;background:#a0a0a0;"></div>
<div style="left:254px;top:258px;width:108px;height:1px;background:#a0a0a0;"></div>
<div style="left:254px;top:259px;width:108px;height:20px;background:#ffffe1;"></div>
<div style="left:360px;top:259px;width:2px;height:22px;background:#ffa500;"></div>
<span id="t115" class="t" style="top:234.84px;font-weight:700;color:#000;letter-spacing:0.491px;left:101.45px;width:400px;text-align:center;">Importe</span>
<div style="left:362px;top:226px;width:120px;height:33px;background:#f0f0f0;"></div>
<div style="left:362px;top:226px;width:119px;height:1px;background:#fff;"></div>
<div style="left:362px;top:226px;width:1px;height:32px;background:#fff;"></div>
<div style="left:481px;top:226px;width:1px;height:33px;background:#a0a0a0;"></div>
<div style="left:362px;top:258px;width:120px;height:1px;background:#a0a0a0;"></div>
<div style="left:362px;top:259px;width:120px;height:20px;background:#ffffe1;"></div>
<div style="left:480px;top:259px;width:2px;height:22px;background:#ffa500;"></div>
<span id="t116" class="t" style="top:234.84px;font-weight:700;color:#000;letter-spacing:0.567px;left:220.88px;width:400px;text-align:center;">IVA</span>
<div style="left:482px;top:226px;width:120px;height:33px;background:#f0f0f0;"></div>
<div style="left:482px;top:226px;width:119px;height:1px;background:#fff;"></div>
<div style="left:482px;top:226px;width:1px;height:32px;background:#fff;"></div>
<div style="left:601px;top:226px;width:1px;height:33px;background:#a0a0a0;"></div>
<div style="left:482px;top:258px;width:120px;height:1px;background:#a0a0a0;"></div>
<div style="left:482px;top:259px;width:120px;height:20px;background:#ffffe1;"></div>
<div style="left:600px;top:259px;width:2px;height:22px;background:#ffa500;"></div>
<span id="t117" class="t" style="top:234.84px;font-weight:700;color:#000;letter-spacing:0.120px;left:340.76px;width:400px;text-align:center;">Total</span>
<div style="left:602px;top:226px;width:62px;height:33px;background:#f0f0f0;"></div>
<div style="left:602px;top:226px;width:61px;height:1px;background:#fff;"></div>
<div style="left:602px;top:226px;width:1px;height:32px;background:#fff;"></div>
<div style="left:663px;top:226px;width:1px;height:33px;background:#a0a0a0;"></div>
<div style="left:602px;top:258px;width:62px;height:1px;background:#a0a0a0;"></div>
<div style="left:602px;top:259px;width:62px;height:20px;background:#ffffe1;"></div>
<div style="left:662px;top:259px;width:2px;height:22px;background:#ffa500;"></div>
<span id="t118" class="t" style="top:234.84px;font-weight:700;color:#000;letter-spacing:-0.247px;left:431.68px;width:400px;text-align:center;">Comp</span>
<div style="left:664px;top:226px;width:58px;height:33px;background:#f0f0f0;"></div>
<div style="left:664px;top:226px;width:57px;height:1px;background:#fff;"></div>
<div style="left:664px;top:226px;width:1px;height:32px;background:#fff;"></div>
<div style="left:721px;top:226px;width:1px;height:33px;background:#a0a0a0;"></div>
<div style="left:664px;top:258px;width:58px;height:1px;background:#a0a0a0;"></div>
<div style="left:664px;top:259px;width:58px;height:20px;background:#ffffe1;"></div>
<div style="left:720px;top:259px;width:2px;height:22px;background:#ffa500;"></div>
<span id="t119" class="t" style="top:234.84px;font-weight:700;color:#000;letter-spacing:-0.313px;left:491.74px;width:400px;text-align:center;">Cheq</span>
<div style="left:722px;top:226px;width:54px;height:33px;background:#f0f0f0;"></div>
<div style="left:722px;top:226px;width:53px;height:1px;background:#fff;"></div>
<div style="left:722px;top:226px;width:1px;height:32px;background:#fff;"></div>
<div style="left:775px;top:226px;width:1px;height:33px;background:#a0a0a0;"></div>
<div style="left:722px;top:258px;width:54px;height:1px;background:#a0a0a0;"></div>
<div style="left:722px;top:259px;width:54px;height:20px;background:#ffffe1;"></div>
<div style="left:774px;top:259px;width:2px;height:22px;background:#ffa500;"></div>
<span id="t120" class="t" style="top:234.84px;font-weight:700;color:#000;letter-spacing:-0.028px;left:548.19px;width:400px;text-align:center;">Tran</span>
<div style="left:776px;top:226px;width:57px;height:33px;background:#f0f0f0;"></div>
<div style="left:776px;top:226px;width:56px;height:1px;background:#fff;"></div>
<div style="left:776px;top:226px;width:1px;height:32px;background:#fff;"></div>
<div style="left:832px;top:226px;width:1px;height:33px;background:#a0a0a0;"></div>
<div style="left:776px;top:258px;width:57px;height:1px;background:#a0a0a0;"></div>
<div style="left:776px;top:259px;width:57px;height:20px;background:#ffffe1;"></div>
<div style="left:831px;top:259px;width:2px;height:22px;background:#ffa500;"></div>
<span id="t121" class="t" style="top:234.84px;font-weight:700;color:#000;letter-spacing:-0.461px;left:603.47px;width:400px;text-align:center;">Pago</span>
<div style="left:833px;top:226px;width:69px;height:33px;background:#f0f0f0;"></div>
<div style="left:833px;top:226px;width:68px;height:1px;background:#fff;"></div>
<div style="left:833px;top:226px;width:1px;height:32px;background:#fff;"></div>
<div style="left:901px;top:226px;width:1px;height:33px;background:#a0a0a0;"></div>
<div style="left:833px;top:258px;width:69px;height:1px;background:#a0a0a0;"></div>
<div style="left:833px;top:259px;width:69px;height:20px;background:#ffffe1;"></div>
<div style="left:900px;top:259px;width:2px;height:22px;background:#ffa500;"></div>
<span id="t122" class="t" style="top:234.84px;font-weight:700;color:#000;letter-spacing:-0.102px;left:666.65px;width:400px;text-align:center;">Doctos</span>
<div style="left:902px;top:226px;width:99px;height:33px;background:#f0f0f0;"></div>
<div style="left:902px;top:226px;width:98px;height:1px;background:#fff;"></div>
<div style="left:902px;top:226px;width:1px;height:32px;background:#fff;"></div>
<div style="left:1000px;top:226px;width:1px;height:33px;background:#a0a0a0;"></div>
<div style="left:902px;top:258px;width:99px;height:1px;background:#a0a0a0;"></div>
<div style="left:902px;top:259px;width:99px;height:20px;background:#ffffe1;"></div>
<div style="left:999px;top:259px;width:2px;height:22px;background:#ffa500;"></div>
<span id="t123" class="t" style="top:234.84px;font-weight:700;color:#000;letter-spacing:-0.244px;left:750.38px;width:400px;text-align:center;">Observación</span>
<div style="left:1001px;top:226px;width:84px;height:33px;background:#fff;"></div>
<div style="left:1084px;top:226px;width:1px;height:33px;background:#a0a0a0;"></div>
<div style="left:1001px;top:258px;width:84px;height:1px;background:#a0a0a0;"></div>
<div style="left:1001px;top:259px;width:84px;height:20px;background:#fff;"></div>
<div style="left:1083px;top:259px;width:2px;height:22px;background:#ffa500;"></div>
<span id="t124" class="t" style="top:234.84px;color:#000;letter-spacing:-0.120px;left:841.84px;width:400px;text-align:center;">Registro Ok</span>
<div style="left:1085px;top:226px;width:84px;height:33px;background:#f0f0f0;"></div>
<div style="left:1085px;top:226px;width:83px;height:1px;background:#fff;"></div>
<div style="left:1085px;top:226px;width:1px;height:32px;background:#fff;"></div>
<div style="left:1168px;top:226px;width:1px;height:33px;background:#a0a0a0;"></div>
<div style="left:1085px;top:258px;width:84px;height:1px;background:#a0a0a0;"></div>
<div style="left:1085px;top:259px;width:84px;height:20px;background:#ffffe1;"></div>
<div style="left:1167px;top:259px;width:2px;height:22px;background:#ffa500;"></div>
<span id="t125" class="t" style="top:234.84px;font-weight:700;color:#000;letter-spacing:-0.326px;left:926.04px;width:400px;text-align:center;">Req. fiscales</span>
<div style="left:1169px;top:226px;width:91px;height:33px;background:#f0f0f0;"></div>
<div style="left:1169px;top:226px;width:90px;height:1px;background:#fff;"></div>
<div style="left:1169px;top:226px;width:1px;height:32px;background:#fff;"></div>
<div style="left:1259px;top:226px;width:1px;height:33px;background:#a0a0a0;"></div>
<div style="left:1169px;top:258px;width:91px;height:1px;background:#a0a0a0;"></div>
<div style="left:1169px;top:259px;width:91px;height:20px;background:#ffffe1;"></div>
<div style="left:1258px;top:259px;width:2px;height:22px;background:#ffa500;"></div>
<span id="t126" class="t" style="top:234.84px;font-weight:700;color:#000;letter-spacing:-0.480px;left:1012.56px;width:400px;text-align:center;">CFDI</span>
<div style="left:1260px;top:226px;width:86px;height:33px;background:#f0f0f0;"></div>
<div style="left:1260px;top:226px;width:85px;height:1px;background:#fff;"></div>
<div style="left:1260px;top:226px;width:1px;height:32px;background:#fff;"></div>
<div style="left:1345px;top:226px;width:1px;height:33px;background:#a0a0a0;"></div>
<div style="left:1260px;top:258px;width:86px;height:1px;background:#a0a0a0;"></div>
<div style="left:1260px;top:259px;width:86px;height:20px;background:#ffffe1;"></div>
<span id="t127" class="t" style="top:226.84px;font-weight:700;color:#000;letter-spacing:0.268px;left:1104.83px;width:400px;text-align:center;">IVA</span>
<span id="t128" class="t" style="top:241.84px;font-weight:700;color:#000;letter-spacing:-0.525px;left:1104.24px;width:400px;text-align:center;">desglosado</span>
<div style="left:66px;top:279px;width:1279px;height:2px;background:#ffa500;"></div>
<div style="left:253px;top:259px;width:1px;height:20px;background:#696969;"></div>
<div style="left:252px;top:259px;width:1px;height:20px;background:#ffa500;"></div>
<div style="left:1345px;top:226px;width:17px;height:273px;background:#ececee;"></div>
<div style="left:1345px;top:499px;width:17px;height:17px;background:#eceef0;"></div>
<div style="left:30px;top:499px;width:1315px;height:17px;background:#ececee;"></div>
<div class="b" style="left:1345px;top:226px;width:17px;height:17px;background:#f0f0f1;border-color:#a6adb5;"></div>
<svg style="left:1347.5px;top:228.5px" width="12" height="12" viewBox="-6 -6 12 12"><path d="M-3.600 1.300h7.200l-3.600-4.300z" fill="#000"/></svg>
<div class="b" style="left:1345px;top:482px;width:17px;height:17px;background:#f0f0f1;border-color:#a6adb5;"></div>
<svg style="left:1347.5px;top:484.5px" width="12" height="12" viewBox="-6 -6 12 12"><path d="M-4 -2h8l-4 4.500z" fill="#000"/></svg>
<div class="b" style="left:1345px;top:243px;width:17px;height:72px;background:#eeeef0;border-color:#a6adb5;"></div>
<div class="b" style="left:30px;top:499px;width:17px;height:17px;background:#f0f0f1;border-color:#a6adb5;"></div>
<svg style="left:32.5px;top:501.5px" width="12" height="12" viewBox="-6 -6 12 12"><path d="M2 -4v8l-4.500-4z" fill="#000"/></svg>
<div class="b" style="left:1328px;top:499px;width:17px;height:17px;background:#f0f0f1;border-color:#a6adb5;"></div>
<svg style="left:1330.5px;top:501.5px" width="12" height="12" viewBox="-6 -6 12 12"><path d="M-2 -4v8l4.500-4z" fill="#000"/></svg>
<div class="b" style="left:258px;top:499px;width:1066px;height:17px;background:#eeeef0;border-color:#a6adb5;"></div>
<div style="left:28px;top:521px;width:668px;height:1px;background:#a0a0a0;"></div>
<div style="left:29px;top:522px;width:667px;height:1px;background:#696969;"></div>
<div style="left:28px;top:521px;width:1px;height:128px;background:#a0a0a0;"></div>
<div style="left:29px;top:522px;width:1px;height:126px;background:#696969;"></div>
<div style="left:29px;top:648px;width:667px;height:1px;background:#fff;"></div>
<div style="left:695px;top:522px;width:1px;height:127px;background:#fff;"></div>
<div style="left:694px;top:523px;width:1px;height:125px;background:#e3e3e3;"></div>
<div style="left:30px;top:523px;width:664px;height:125px;background:#ababab;"></div>
<div style="left:602px;top:523px;width:1px;height:111px;background:#696969;"></div>
<div style="left:30px;top:633px;width:573px;height:1px;background:#696969;"></div>
<div style="left:30px;top:523px;width:36px;height:22px;background:#f0f0f0;"></div>
<div style="left:30px;top:523px;width:35px;height:1px;background:#fff;"></div>
<div style="left:30px;top:523px;width:1px;height:21px;background:#fff;"></div>
<div style="left:65px;top:523px;width:1px;height:22px;background:#a0a0a0;"></div>
<div style="left:30px;top:544px;width:36px;height:1px;background:#a0a0a0;"></div>
<div style="left:30px;top:545px;width:36px;height:22px;background:#fff;"></div>
<div style="left:65px;top:545px;width:1px;height:22px;background:#a0a0a0;"></div>
<div style="left:30px;top:566px;width:36px;height:1px;background:#a0a0a0;"></div>
<div style="left:30px;top:567px;width:36px;height:22px;background:#f0f0f0;"></div>
<div style="left:30px;top:567px;width:35px;height:1px;background:#fff;"></div>
<div style="left:30px;top:567px;width:1px;height:21px;background:#fff;"></div>
<div style="left:65px;top:567px;width:1px;height:22px;background:#a0a0a0;"></div>
<div style="left:30px;top:588px;width:36px;height:1px;background:#a0a0a0;"></div>
<div style="left:30px;top:589px;width:36px;height:22px;background:#f0f0f0;"></div>
<div style="left:30px;top:589px;width:35px;height:1px;background:#fff;"></div>
<div style="left:30px;top:589px;width:1px;height:21px;background:#fff;"></div>
<div style="left:65px;top:589px;width:1px;height:22px;background:#a0a0a0;"></div>
<div style="left:30px;top:610px;width:36px;height:1px;background:#a0a0a0;"></div>
<div style="left:30px;top:611px;width:36px;height:22px;background:#f0f0f0;"></div>
<div style="left:30px;top:611px;width:35px;height:1px;background:#fff;"></div>
<div style="left:30px;top:611px;width:1px;height:21px;background:#fff;"></div>
<div style="left:65px;top:611px;width:1px;height:22px;background:#a0a0a0;"></div>
<div style="left:30px;top:632px;width:36px;height:1px;background:#a0a0a0;"></div>
<div style="left:66px;top:523px;width:115px;height:22px;background:#fff;"></div>
<div style="left:180px;top:523px;width:1px;height:22px;background:#696969;"></div>
<div style="left:66px;top:544px;width:115px;height:1px;background:#a0a0a0;"></div>
<span id="t129" class="t" style="top:525.84px;color:#000;letter-spacing:0.360px;left:-77.02px;width:400px;text-align:center;">Movimientos</span>
<div style="left:66px;top:545px;width:115px;height:22px;background:#fff;"></div>
<div style="left:180px;top:545px;width:1px;height:22px;background:#696969;"></div>
<div style="left:66px;top:566px;width:114px;height:1px;background:#f0f0f0;"></div>
<div style="left:66px;top:545px;width:114px;height:21px;background:#0078d7;"></div>
<span id="t130" class="t" style="top:547.84px;color:#fff;letter-spacing:-0.079px;left:69.72px;">Total analizado</span>
<div style="left:66px;top:567px;width:115px;height:22px;background:#fff;"></div>
<div style="left:180px;top:567px;width:1px;height:22px;background:#696969;"></div>
<div style="left:66px;top:588px;width:114px;height:1px;background:#f0f0f0;"></div>
<span id="t131" class="t" style="top:569.84px;color:#000;letter-spacing:-0.082px;left:69.72px;">Total no analizado</span>
<div style="left:66px;top:589px;width:115px;height:22px;background:#fff;"></div>
<div style="left:180px;top:589px;width:1px;height:22px;background:#696969;"></div>
<div style="left:66px;top:610px;width:114px;height:1px;background:#f0f0f0;"></div>
<div style="left:66px;top:611px;width:115px;height:22px;background:#fff;"></div>
<div style="left:180px;top:611px;width:1px;height:22px;background:#696969;"></div>
<div style="left:66px;top:632px;width:114px;height:1px;background:#f0f0f0;"></div>
<span id="t132" class="t" style="top:613.84px;font-weight:700;color:#000;letter-spacing:0.045px;left:69.72px;">Total</span>
<div style="left:181px;top:523px;width:64px;height:22px;background:#f0f0f0;"></div>
<div style="left:181px;top:523px;width:63px;height:1px;background:#fff;"></div>
<div style="left:181px;top:523px;width:1px;height:21px;background:#fff;"></div>
<div style="left:244px;top:523px;width:1px;height:22px;background:#a0a0a0;"></div>
<div style="left:181px;top:544px;width:64px;height:1px;background:#a0a0a0;"></div>
<span id="t133" class="t" style="top:525.84px;font-weight:700;color:#000;letter-spacing:-0.343px;left:12.13px;width:400px;text-align:center;">Partidas</span>
<div style="left:181px;top:545px;width:64px;height:22px;background:#f0f3f4;"></div>
<div style="left:244px;top:545px;width:1px;height:22px;background:#f0f0f0;"></div>
<div style="left:181px;top:566px;width:63px;height:1px;background:#f0f0f0;"></div>
<span id="t134" class="t" style="top:547.84px;color:#000;letter-spacing:-0.299px;right:1123.72px;">36</span>
<div style="left:181px;top:567px;width:64px;height:22px;background:#fff;"></div>
<div style="left:244px;top:567px;width:1px;height:22px;background:#f0f0f0;"></div>
<div style="left:181px;top:588px;width:63px;height:1px;background:#f0f0f0;"></div>
<span id="t135" class="t" style="top:569.84px;color:#000;letter-spacing:-0.486px;right:1123.91px;">101</span>
<div style="left:181px;top:589px;width:64px;height:22px;background:#f0f3f4;"></div>
<div style="left:244px;top:589px;width:1px;height:22px;background:#f0f0f0;"></div>
<div style="left:181px;top:610px;width:63px;height:1px;background:#f0f0f0;"></div>
<div style="left:181px;top:611px;width:64px;height:22px;background:#f0f0f0;"></div>
<div style="left:244px;top:611px;width:1px;height:22px;background:#a0a0a0;"></div>
<div style="left:181px;top:632px;width:64px;height:1px;background:#a0a0a0;"></div>
<span id="t136" class="t" style="top:613.84px;font-weight:700;color:#000;letter-spacing:0.464px;right:1122.96px;">137</span>
<div style="left:245px;top:523px;width:68px;height:22px;background:#f0f0f0;"></div>
<div style="left:245px;top:523px;width:67px;height:1px;background:#fff;"></div>
<div style="left:245px;top:523px;width:1px;height:21px;background:#fff;"></div>
<div style="left:312px;top:523px;width:1px;height:22px;background:#a0a0a0;"></div>
<div style="left:245px;top:544px;width:68px;height:1px;background:#a0a0a0;"></div>
<span id="t137" class="t" style="top:525.84px;font-weight:700;color:#000;left:78.30px;width:400px;text-align:center;">%</span>
<div style="left:245px;top:545px;width:68px;height:22px;background:#f0f3f4;"></div>
<div style="left:312px;top:545px;width:1px;height:22px;background:#f0f0f0;"></div>
<div style="left:245px;top:566px;width:67px;height:1px;background:#f0f0f0;"></div>
<span id="t138" class="t" style="top:547.84px;color:#000;letter-spacing:-0.489px;right:1055.31px;">26.28%</span>
<div style="left:245px;top:567px;width:68px;height:22px;background:#fff;"></div>
<div style="left:312px;top:567px;width:1px;height:22px;background:#f0f0f0;"></div>
<div style="left:245px;top:588px;width:67px;height:1px;background:#f0f0f0;"></div>
<span id="t139" class="t" style="top:569.84px;color:#000;letter-spacing:-0.489px;right:1055.31px;">73.72%</span>
<div style="left:245px;top:589px;width:68px;height:22px;background:#f0f3f4;"></div>
<div style="left:312px;top:589px;width:1px;height:22px;background:#f0f0f0;"></div>
<div style="left:245px;top:610px;width:67px;height:1px;background:#f0f0f0;"></div>
<div style="left:245px;top:611px;width:68px;height:22px;background:#f0f0f0;"></div>
<div style="left:312px;top:611px;width:1px;height:22px;background:#a0a0a0;"></div>
<div style="left:245px;top:632px;width:68px;height:1px;background:#a0a0a0;"></div>
<span id="t140" class="t" style="top:613.84px;font-weight:700;color:#000;letter-spacing:0.148px;right:1054.67px;">100.00%</span>
<div style="left:313px;top:523px;width:92px;height:22px;background:#f0f0f0;"></div>
<div style="left:313px;top:523px;width:91px;height:1px;background:#fff;"></div>
<div style="left:313px;top:523px;width:1px;height:21px;background:#fff;"></div>
<div style="left:404px;top:523px;width:1px;height:22px;background:#a0a0a0;"></div>
<div style="left:313px;top:544px;width:92px;height:1px;background:#a0a0a0;"></div>
<span id="t141" class="t" style="top:525.84px;font-weight:700;color:#000;letter-spacing:-0.577px;left:158.01px;width:400px;text-align:center;">Cargos</span>
<div style="left:313px;top:545px;width:92px;height:22px;background:#f0f3f4;"></div>
<div style="left:404px;top:545px;width:1px;height:22px;background:#f0f0f0;"></div>
<div style="left:313px;top:566px;width:91px;height:1px;background:#f0f0f0;"></div>
<span id="t142" class="t" style="top:547.84px;color:#000;letter-spacing:-0.567px;right:963.99px;">706,407.56</span>
<div style="left:313px;top:567px;width:92px;height:22px;background:#fff;"></div>
<div style="left:404px;top:567px;width:1px;height:22px;background:#f0f0f0;"></div>
<div style="left:313px;top:588px;width:91px;height:1px;background:#f0f0f0;"></div>
<span id="t143" class="t" style="top:569.84px;color:#000;letter-spacing:-0.511px;right:963.93px;">2,178,767.16</span>
<div style="left:313px;top:589px;width:92px;height:22px;background:#f0f3f4;"></div>
<div style="left:404px;top:589px;width:1px;height:22px;background:#f0f0f0;"></div>
<div style="left:313px;top:610px;width:91px;height:1px;background:#f0f0f0;"></div>
<div style="left:313px;top:611px;width:92px;height:22px;background:#f0f0f0;"></div>
<div style="left:404px;top:611px;width:1px;height:22px;background:#a0a0a0;"></div>
<div style="left:313px;top:632px;width:92px;height:1px;background:#a0a0a0;"></div>
<span id="t144" class="t" style="top:613.84px;font-weight:700;color:#000;letter-spacing:0.235px;right:963.19px;">2,885,174.72</span>
<div style="left:405px;top:523px;width:68px;height:22px;background:#f0f0f0;"></div>
<div style="left:405px;top:523px;width:67px;height:1px;background:#fff;"></div>
<div style="left:405px;top:523px;width:1px;height:21px;background:#fff;"></div>
<div style="left:472px;top:523px;width:1px;height:22px;background:#a0a0a0;"></div>
<div style="left:405px;top:544px;width:68px;height:1px;background:#a0a0a0;"></div>
<span id="t145" class="t" style="top:525.84px;font-weight:700;color:#000;left:238.30px;width:400px;text-align:center;">%</span>
<div style="left:405px;top:545px;width:68px;height:22px;background:#f0f3f4;"></div>
<div style="left:472px;top:545px;width:1px;height:22px;background:#f0f0f0;"></div>
<div style="left:405px;top:566px;width:67px;height:1px;background:#f0f0f0;"></div>
<span id="t146" class="t" style="top:547.84px;color:#000;letter-spacing:-0.489px;right:895.31px;">24.48%</span>
<div style="left:405px;top:567px;width:68px;height:22px;background:#fff;"></div>
<div style="left:472px;top:567px;width:1px;height:22px;background:#f0f0f0;"></div>
<div style="left:405px;top:588px;width:67px;height:1px;background:#f0f0f0;"></div>
<span id="t147" class="t" style="top:569.84px;color:#000;letter-spacing:-0.489px;right:895.31px;">75.52%</span>
<div style="left:405px;top:589px;width:68px;height:22px;background:#f0f3f4;"></div>
<div style="left:472px;top:589px;width:1px;height:22px;background:#f0f0f0;"></div>
<div style="left:405px;top:610px;width:67px;height:1px;background:#f0f0f0;"></div>
<div style="left:405px;top:611px;width:68px;height:22px;background:#f0f0f0;"></div>
<div style="left:472px;top:611px;width:1px;height:22px;background:#a0a0a0;"></div>
<div style="left:405px;top:632px;width:68px;height:1px;background:#a0a0a0;"></div>
<span id="t148" class="t" style="top:613.84px;font-weight:700;color:#000;letter-spacing:0.148px;right:894.67px;">100.00%</span>
<div style="left:473px;top:523px;width:61px;height:22px;background:#f0f0f0;"></div>
<div style="left:473px;top:523px;width:60px;height:1px;background:#fff;"></div>
<div style="left:473px;top:523px;width:1px;height:21px;background:#fff;"></div>
<div style="left:533px;top:523px;width:1px;height:22px;background:#a0a0a0;"></div>
<div style="left:473px;top:544px;width:61px;height:1px;background:#a0a0a0;"></div>
<span id="t149" class="t" style="top:525.84px;font-weight:700;color:#000;letter-spacing:-0.522px;left:302.54px;width:400px;text-align:center;">Abonos</span>
<div style="left:473px;top:545px;width:61px;height:22px;background:#f0f3f4;"></div>
<div style="left:533px;top:545px;width:1px;height:22px;background:#f0f0f0;"></div>
<div style="left:473px;top:566px;width:60px;height:1px;background:#f0f0f0;"></div>
<div style="left:473px;top:567px;width:61px;height:22px;background:#fff;"></div>
<div style="left:533px;top:567px;width:1px;height:22px;background:#f0f0f0;"></div>
<div style="left:473px;top:588px;width:60px;height:1px;background:#f0f0f0;"></div>
<div style="left:473px;top:589px;width:61px;height:22px;background:#f0f3f4;"></div>
<div style="left:533px;top:589px;width:1px;height:22px;background:#f0f0f0;"></div>
<div style="left:473px;top:610px;width:60px;height:1px;background:#f0f0f0;"></div>
<div style="left:473px;top:611px;width:61px;height:22px;background:#f0f0f0;"></div>
<div style="left:533px;top:611px;width:1px;height:22px;background:#a0a0a0;"></div>
<div style="left:473px;top:632px;width:61px;height:1px;background:#a0a0a0;"></div>
<div style="left:534px;top:523px;width:68px;height:22px;background:#f0f0f0;"></div>
<div style="left:534px;top:523px;width:67px;height:1px;background:#fff;"></div>
<div style="left:534px;top:523px;width:1px;height:21px;background:#fff;"></div>
<div style="left:601px;top:523px;width:1px;height:22px;background:#a0a0a0;"></div>
<div style="left:534px;top:544px;width:68px;height:1px;background:#a0a0a0;"></div>
<span id="t150" class="t" style="top:525.84px;font-weight:700;color:#000;left:367.30px;width:400px;text-align:center;">%</span>
<div style="left:534px;top:545px;width:68px;height:22px;background:#f0f3f4;"></div>
<div style="left:601px;top:545px;width:1px;height:22px;background:#f0f0f0;"></div>
<div style="left:534px;top:566px;width:67px;height:1px;background:#f0f0f0;"></div>
<div style="left:534px;top:567px;width:68px;height:22px;background:#fff;"></div>
<div style="left:601px;top:567px;width:1px;height:22px;background:#f0f0f0;"></div>
<div style="left:534px;top:588px;width:67px;height:1px;background:#f0f0f0;"></div>
<span id="t151" class="t" style="top:569.84px;color:#000;letter-spacing:-0.652px;right:766.47px;">100.00%</span>
<div style="left:534px;top:589px;width:68px;height:22px;background:#f0f3f4;"></div>
<div style="left:601px;top:589px;width:1px;height:22px;background:#f0f0f0;"></div>
<div style="left:534px;top:610px;width:67px;height:1px;background:#f0f0f0;"></div>
<div style="left:534px;top:611px;width:68px;height:22px;background:#f0f0f0;"></div>
<div style="left:601px;top:611px;width:1px;height:22px;background:#a0a0a0;"></div>
<div style="left:534px;top:632px;width:68px;height:1px;background:#a0a0a0;"></div>
<span id="t152" class="t" style="top:613.84px;font-weight:700;color:#000;letter-spacing:0.148px;right:765.67px;">100.00%</span>
<div style="left:699px;top:521px;width:664px;height:1px;background:#a0a0a0;"></div>
<div style="left:700px;top:522px;width:663px;height:1px;background:#696969;"></div>
<div style="left:699px;top:521px;width:1px;height:128px;background:#a0a0a0;"></div>
<div style="left:700px;top:522px;width:1px;height:126px;background:#696969;"></div>
<div style="left:700px;top:648px;width:663px;height:1px;background:#fff;"></div>
<div style="left:701px;top:523px;width:662px;height:125px;background:#ababab;"></div>
<div style="left:1077px;top:523px;width:1px;height:111px;background:#696969;"></div>
<div style="left:701px;top:633px;width:377px;height:1px;background:#696969;"></div>
<div style="left:701px;top:523px;width:36px;height:22px;background:#f0f0f0;"></div>
<div style="left:701px;top:523px;width:35px;height:1px;background:#fff;"></div>
<div style="left:701px;top:523px;width:1px;height:21px;background:#fff;"></div>
<div style="left:736px;top:523px;width:1px;height:22px;background:#a0a0a0;"></div>
<div style="left:701px;top:544px;width:36px;height:1px;background:#a0a0a0;"></div>
<div style="left:701px;top:545px;width:36px;height:22px;background:#fff;"></div>
<div style="left:736px;top:545px;width:1px;height:22px;background:#a0a0a0;"></div>
<div style="left:701px;top:566px;width:36px;height:1px;background:#a0a0a0;"></div>
<div style="left:701px;top:567px;width:36px;height:22px;background:#f0f0f0;"></div>
<div style="left:701px;top:567px;width:35px;height:1px;background:#fff;"></div>
<div style="left:701px;top:567px;width:1px;height:21px;background:#fff;"></div>
<div style="left:736px;top:567px;width:1px;height:22px;background:#a0a0a0;"></div>
<div style="left:701px;top:588px;width:36px;height:1px;background:#a0a0a0;"></div>
<div style="left:701px;top:589px;width:36px;height:22px;background:#f0f0f0;"></div>
<div style="left:701px;top:589px;width:35px;height:1px;background:#fff;"></div>
<div style="left:701px;top:589px;width:1px;height:21px;background:#fff;"></div>
<div style="left:736px;top:589px;width:1px;height:22px;background:#a0a0a0;"></div>
<div style="left:701px;top:610px;width:36px;height:1px;background:#a0a0a0;"></div>
<div style="left:701px;top:611px;width:36px;height:22px;background:#f0f0f0;"></div>
<div style="left:701px;top:611px;width:35px;height:1px;background:#fff;"></div>
<div style="left:701px;top:611px;width:1px;height:21px;background:#fff;"></div>
<div style="left:736px;top:611px;width:1px;height:22px;background:#a0a0a0;"></div>
<div style="left:701px;top:632px;width:36px;height:1px;background:#a0a0a0;"></div>
<div style="left:737px;top:523px;width:100px;height:22px;background:#fff;"></div>
<div style="left:836px;top:523px;width:1px;height:22px;background:#696969;"></div>
<div style="left:737px;top:544px;width:100px;height:1px;background:#a0a0a0;"></div>
<span id="t153" class="t" style="top:525.84px;color:#000;letter-spacing:0.514px;left:586.56px;width:400px;text-align:center;">Atributo</span>
<div style="left:737px;top:545px;width:100px;height:22px;background:#fff;"></div>
<div style="left:836px;top:545px;width:1px;height:22px;background:#696969;"></div>
<div style="left:737px;top:566px;width:99px;height:1px;background:#f0f0f0;"></div>
<div style="left:737px;top:545px;width:99px;height:21px;background:#0078d7;"></div>
<span id="t154" class="t" style="top:547.84px;color:#fff;letter-spacing:-0.110px;left:740.72px;">Registro Ok</span>
<div style="left:737px;top:567px;width:100px;height:22px;background:#fff;"></div>
<div style="left:836px;top:567px;width:1px;height:22px;background:#696969;"></div>
<div style="left:737px;top:588px;width:99px;height:1px;background:#f0f0f0;"></div>
<span id="t155" class="t" style="top:569.84px;color:#000;letter-spacing:-0.337px;left:740.72px;">Req. fiscales</span>
<div style="left:737px;top:589px;width:100px;height:22px;background:#fff;"></div>
<div style="left:836px;top:589px;width:1px;height:22px;background:#696969;"></div>
<div style="left:737px;top:610px;width:99px;height:1px;background:#f0f0f0;"></div>
<span id="t156" class="t" style="top:591.84px;color:#000;letter-spacing:-0.813px;left:740.72px;">CFDI</span>
<div style="left:737px;top:611px;width:100px;height:22px;background:#fff;"></div>
<div style="left:836px;top:611px;width:1px;height:22px;background:#696969;"></div>
<div style="left:737px;top:632px;width:99px;height:1px;background:#f0f0f0;"></div>
<span id="t157" class="t" style="top:613.84px;color:#000;letter-spacing:-0.181px;left:740.72px;">IVA desglosado</span>
<div style="left:837px;top:523px;width:51px;height:22px;background:#f0f0f0;"></div>
<div style="left:837px;top:523px;width:50px;height:1px;background:#fff;"></div>
<div style="left:837px;top:523px;width:1px;height:21px;background:#fff;"></div>
<div style="left:887px;top:523px;width:1px;height:22px;background:#a0a0a0;"></div>
<div style="left:837px;top:544px;width:51px;height:1px;background:#a0a0a0;"></div>
<div style="left:837px;top:545px;width:51px;height:22px;background:#f0f3f4;"></div>
<div style="left:887px;top:545px;width:1px;height:22px;background:#f0f0f0;"></div>
<div style="left:837px;top:566px;width:50px;height:1px;background:#f0f0f0;"></div>
<span id="t158" class="t" style="top:547.84px;color:#000;letter-spacing:-0.318px;left:661.04px;width:400px;text-align:center;">2.78%</span>
<div style="left:837px;top:567px;width:51px;height:22px;background:#fff;"></div>
<div style="left:887px;top:567px;width:1px;height:22px;background:#f0f0f0;"></div>
<div style="left:837px;top:588px;width:50px;height:1px;background:#f0f0f0;"></div>
<div style="left:837px;top:589px;width:51px;height:22px;background:#f0f3f4;"></div>
<div style="left:887px;top:589px;width:1px;height:22px;background:#f0f0f0;"></div>
<div style="left:837px;top:610px;width:50px;height:1px;background:#f0f0f0;"></div>
<div style="left:837px;top:611px;width:51px;height:22px;background:#fff;"></div>
<div style="left:887px;top:611px;width:1px;height:22px;background:#f0f0f0;"></div>
<div style="left:837px;top:632px;width:50px;height:1px;background:#f0f0f0;"></div>
<div style="left:888px;top:523px;width:29px;height:22px;background:#f0f0f0;"></div>
<div style="left:888px;top:523px;width:28px;height:1px;background:#fff;"></div>
<div style="left:888px;top:523px;width:1px;height:21px;background:#fff;"></div>
<div style="left:916px;top:523px;width:1px;height:22px;background:#a0a0a0;"></div>
<div style="left:888px;top:544px;width:29px;height:1px;background:#a0a0a0;"></div>
<div style="left:888px;top:545px;width:29px;height:22px;background:#f0f3f4;"></div>
<div style="left:916px;top:545px;width:1px;height:22px;background:#f0f0f0;"></div>
<div style="left:888px;top:566px;width:28px;height:1px;background:#f0f0f0;"></div>
<div style="left:888px;top:567px;width:29px;height:22px;background:#fff;"></div>
<div style="left:916px;top:567px;width:1px;height:22px;background:#f0f0f0;"></div>
<div style="left:888px;top:588px;width:28px;height:1px;background:#f0f0f0;"></div>
<div style="left:888px;top:589px;width:29px;height:22px;background:#f0f3f4;"></div>
<div style="left:916px;top:589px;width:1px;height:22px;background:#f0f0f0;"></div>
<div style="left:888px;top:610px;width:28px;height:1px;background:#f0f0f0;"></div>
<div style="left:888px;top:611px;width:29px;height:22px;background:#fff;"></div>
<div style="left:916px;top:611px;width:1px;height:22px;background:#f0f0f0;"></div>
<div style="left:888px;top:632px;width:28px;height:1px;background:#f0f0f0;"></div>
<div style="left:917px;top:523px;width:29px;height:22px;background:#f0f0f0;"></div>
<div style="left:917px;top:523px;width:28px;height:1px;background:#fff;"></div>
<div style="left:917px;top:523px;width:1px;height:21px;background:#fff;"></div>
<div style="left:945px;top:523px;width:1px;height:22px;background:#a0a0a0;"></div>
<div style="left:917px;top:544px;width:29px;height:1px;background:#a0a0a0;"></div>
<div style="left:917px;top:545px;width:29px;height:22px;background:#f0f3f4;"></div>
<div style="left:945px;top:545px;width:1px;height:22px;background:#f0f0f0;"></div>
<div style="left:917px;top:566px;width:28px;height:1px;background:#f0f0f0;"></div>
<div style="left:917px;top:567px;width:29px;height:22px;background:#fff;"></div>
<div style="left:945px;top:567px;width:1px;height:22px;background:#f0f0f0;"></div>
<div style="left:917px;top:588px;width:28px;height:1px;background:#f0f0f0;"></div>
<div style="left:917px;top:589px;width:29px;height:22px;background:#f0f3f4;"></div>
<div style="left:945px;top:589px;width:1px;height:22px;background:#f0f0f0;"></div>
<div style="left:917px;top:610px;width:28px;height:1px;background:#f0f0f0;"></div>
<div style="left:917px;top:611px;width:29px;height:22px;background:#fff;"></div>
<div style="left:945px;top:611px;width:1px;height:22px;background:#f0f0f0;"></div>
<div style="left:917px;top:632px;width:28px;height:1px;background:#f0f0f0;"></div>
<div style="left:946px;top:523px;width:63px;height:22px;background:#f0f0f0;"></div>
<div style="left:946px;top:523px;width:62px;height:1px;background:#fff;"></div>
<div style="left:946px;top:523px;width:1px;height:21px;background:#fff;"></div>
<div style="left:1008px;top:523px;width:1px;height:22px;background:#a0a0a0;"></div>
<div style="left:946px;top:544px;width:63px;height:1px;background:#a0a0a0;"></div>
<div style="left:946px;top:545px;width:63px;height:22px;background:#f0f3f4;"></div>
<div style="left:1008px;top:545px;width:1px;height:22px;background:#f0f0f0;"></div>
<div style="left:946px;top:566px;width:62px;height:1px;background:#f0f0f0;"></div>
<span id="t159" class="t" style="top:547.84px;color:#000;letter-spacing:-0.389px;left:776.01px;width:400px;text-align:center;">97.22%</span>
<div style="left:946px;top:567px;width:63px;height:22px;background:#fff;"></div>
<div style="left:1008px;top:567px;width:1px;height:22px;background:#f0f0f0;"></div>
<div style="left:946px;top:588px;width:62px;height:1px;background:#f0f0f0;"></div>
<span id="t160" class="t" style="top:569.84px;color:#000;letter-spacing:-0.652px;left:775.87px;width:400px;text-align:center;">100.00%</span>
<div style="left:946px;top:589px;width:63px;height:22px;background:#f0f3f4;"></div>
<div style="left:1008px;top:589px;width:1px;height:22px;background:#f0f0f0;"></div>
<div style="left:946px;top:610px;width:62px;height:1px;background:#f0f0f0;"></div>
<span id="t161" class="t" style="top:591.84px;color:#000;letter-spacing:-0.652px;left:775.87px;width:400px;text-align:center;">100.00%</span>
<div style="left:946px;top:611px;width:63px;height:22px;background:#fff;"></div>
<div style="left:1008px;top:611px;width:1px;height:22px;background:#f0f0f0;"></div>
<div style="left:946px;top:632px;width:62px;height:1px;background:#f0f0f0;"></div>
<span id="t162" class="t" style="top:613.84px;color:#000;letter-spacing:-0.652px;left:775.87px;width:400px;text-align:center;">100.00%</span>
<div style="left:1009px;top:523px;width:68px;height:22px;background:#f0f0f0;"></div>
<div style="left:1009px;top:523px;width:67px;height:1px;background:#fff;"></div>
<div style="left:1009px;top:523px;width:1px;height:21px;background:#fff;"></div>
<div style="left:1076px;top:523px;width:1px;height:22px;background:#a0a0a0;"></div>
<div style="left:1009px;top:544px;width:68px;height:1px;background:#a0a0a0;"></div>
<span id="t163" class="t" style="top:525.84px;font-weight:700;color:#000;letter-spacing:0.170px;left:842.38px;width:400px;text-align:center;">Total</span>
<div style="left:1009px;top:545px;width:68px;height:22px;background:#f0f0f0;"></div>
<div style="left:1009px;top:545px;width:67px;height:1px;background:#fff;"></div>
<div style="left:1009px;top:545px;width:1px;height:21px;background:#fff;"></div>
<div style="left:1076px;top:545px;width:1px;height:22px;background:#a0a0a0;"></div>
<div style="left:1009px;top:566px;width:68px;height:1px;background:#a0a0a0;"></div>
<span id="t164" class="t" style="top:547.84px;font-weight:700;color:#000;letter-spacing:0.064px;right:290.76px;">100.00%</span>
<div style="left:1009px;top:567px;width:68px;height:22px;background:#f0f0f0;"></div>
<div style="left:1009px;top:567px;width:67px;height:1px;background:#fff;"></div>
<div style="left:1009px;top:567px;width:1px;height:21px;background:#fff;"></div>
<div style="left:1076px;top:567px;width:1px;height:22px;background:#a0a0a0;"></div>
<div style="left:1009px;top:588px;width:68px;height:1px;background:#a0a0a0;"></div>
<span id="t165" class="t" style="top:569.84px;font-weight:700;color:#000;letter-spacing:0.064px;right:290.76px;">100.00%</span>
<div style="left:1009px;top:589px;width:68px;height:22px;background:#f0f0f0;"></div>
<div style="left:1009px;top:589px;width:67px;height:1px;background:#fff;"></div>
<div style="left:1009px;top:589px;width:1px;height:21px;background:#fff;"></div>
<div style="left:1076px;top:589px;width:1px;height:22px;background:#a0a0a0;"></div>
<div style="left:1009px;top:610px;width:68px;height:1px;background:#a0a0a0;"></div>
<span id="t166" class="t" style="top:591.84px;font-weight:700;color:#000;letter-spacing:0.064px;right:290.76px;">100.00%</span>
<div style="left:1009px;top:611px;width:68px;height:22px;background:#f0f0f0;"></div>
<div style="left:1009px;top:611px;width:67px;height:1px;background:#fff;"></div>
<div style="left:1009px;top:611px;width:1px;height:21px;background:#fff;"></div>
<div style="left:1076px;top:611px;width:1px;height:22px;background:#a0a0a0;"></div>
<div style="left:1009px;top:632px;width:68px;height:1px;background:#a0a0a0;"></div>
<span id="t167" class="t" style="top:613.84px;font-weight:700;color:#000;letter-spacing:0.064px;right:290.76px;">100.00%</span>
<div style="left:854px;top:525px;width:16px;height:16px;background:#fbfbfb;"></div>
<svg style="left:854px;top:525px" width="16" height="16"><use href="#chk"/></svg>
<div style="left:894px;top:525px;width:16px;height:16px;background:#fafafa;"></div>
<svg style="left:894px;top:525px" width="16" height="16"><use href="#xx"/></svg>
<span class="t" style="left:923px;top:525.500px;font:9.600px/16px 'DejaVu Sans',sans-serif;letter-spacing:1.500px;color:#000;-webkit-text-stroke:0.250px #000">NA</span>
<div class="b" style="left:970px;top:526px;width:14px;height:14px;background:#fff;border-color:#3b9bff;border-width:1.400px;"></div>
<div class="b" style="left:30px;top:652px;width:47px;height:24px;background:#eeeff1;border-color:#aab4c2;border-radius:3px;"></div>
<div class="b" style="left:77px;top:652px;width:96px;height:24px;background:#eeeff1;border-color:#aab4c2;border-radius:3px;"></div>
<span id="t168" class="t" style="top:655.84px;letter-spacing:0.343px;left:37.72px;">Texto</span>
<span id="t169" class="t" style="top:655.84px;letter-spacing:-0.124px;left:84.52px;">Observaciones</span>
<div style="left:0px;top:678px;width:1362px;height:21px;background:#a0a8ac;"></div>
<div style="left:267px;top:679px;width:217px;height:20px;background:#fff;"></div>
<span id="t170" class="t" style="top:681.84px;color:#000;letter-spacing:-0.092px;left:2.72px;">Usuario Actual: Guadalupe</span>
<span id="t171" class="t" style="top:680.84px;color:#000;letter-spacing:-0.134px;left:145.72px;">Período Seleccionado:</span>
<svg style="left:473px;top:686px" width="8" height="5"><path d="M0.500 0.500h6l-3 3.500z" fill="#606060"/></svg>
</body></html>
